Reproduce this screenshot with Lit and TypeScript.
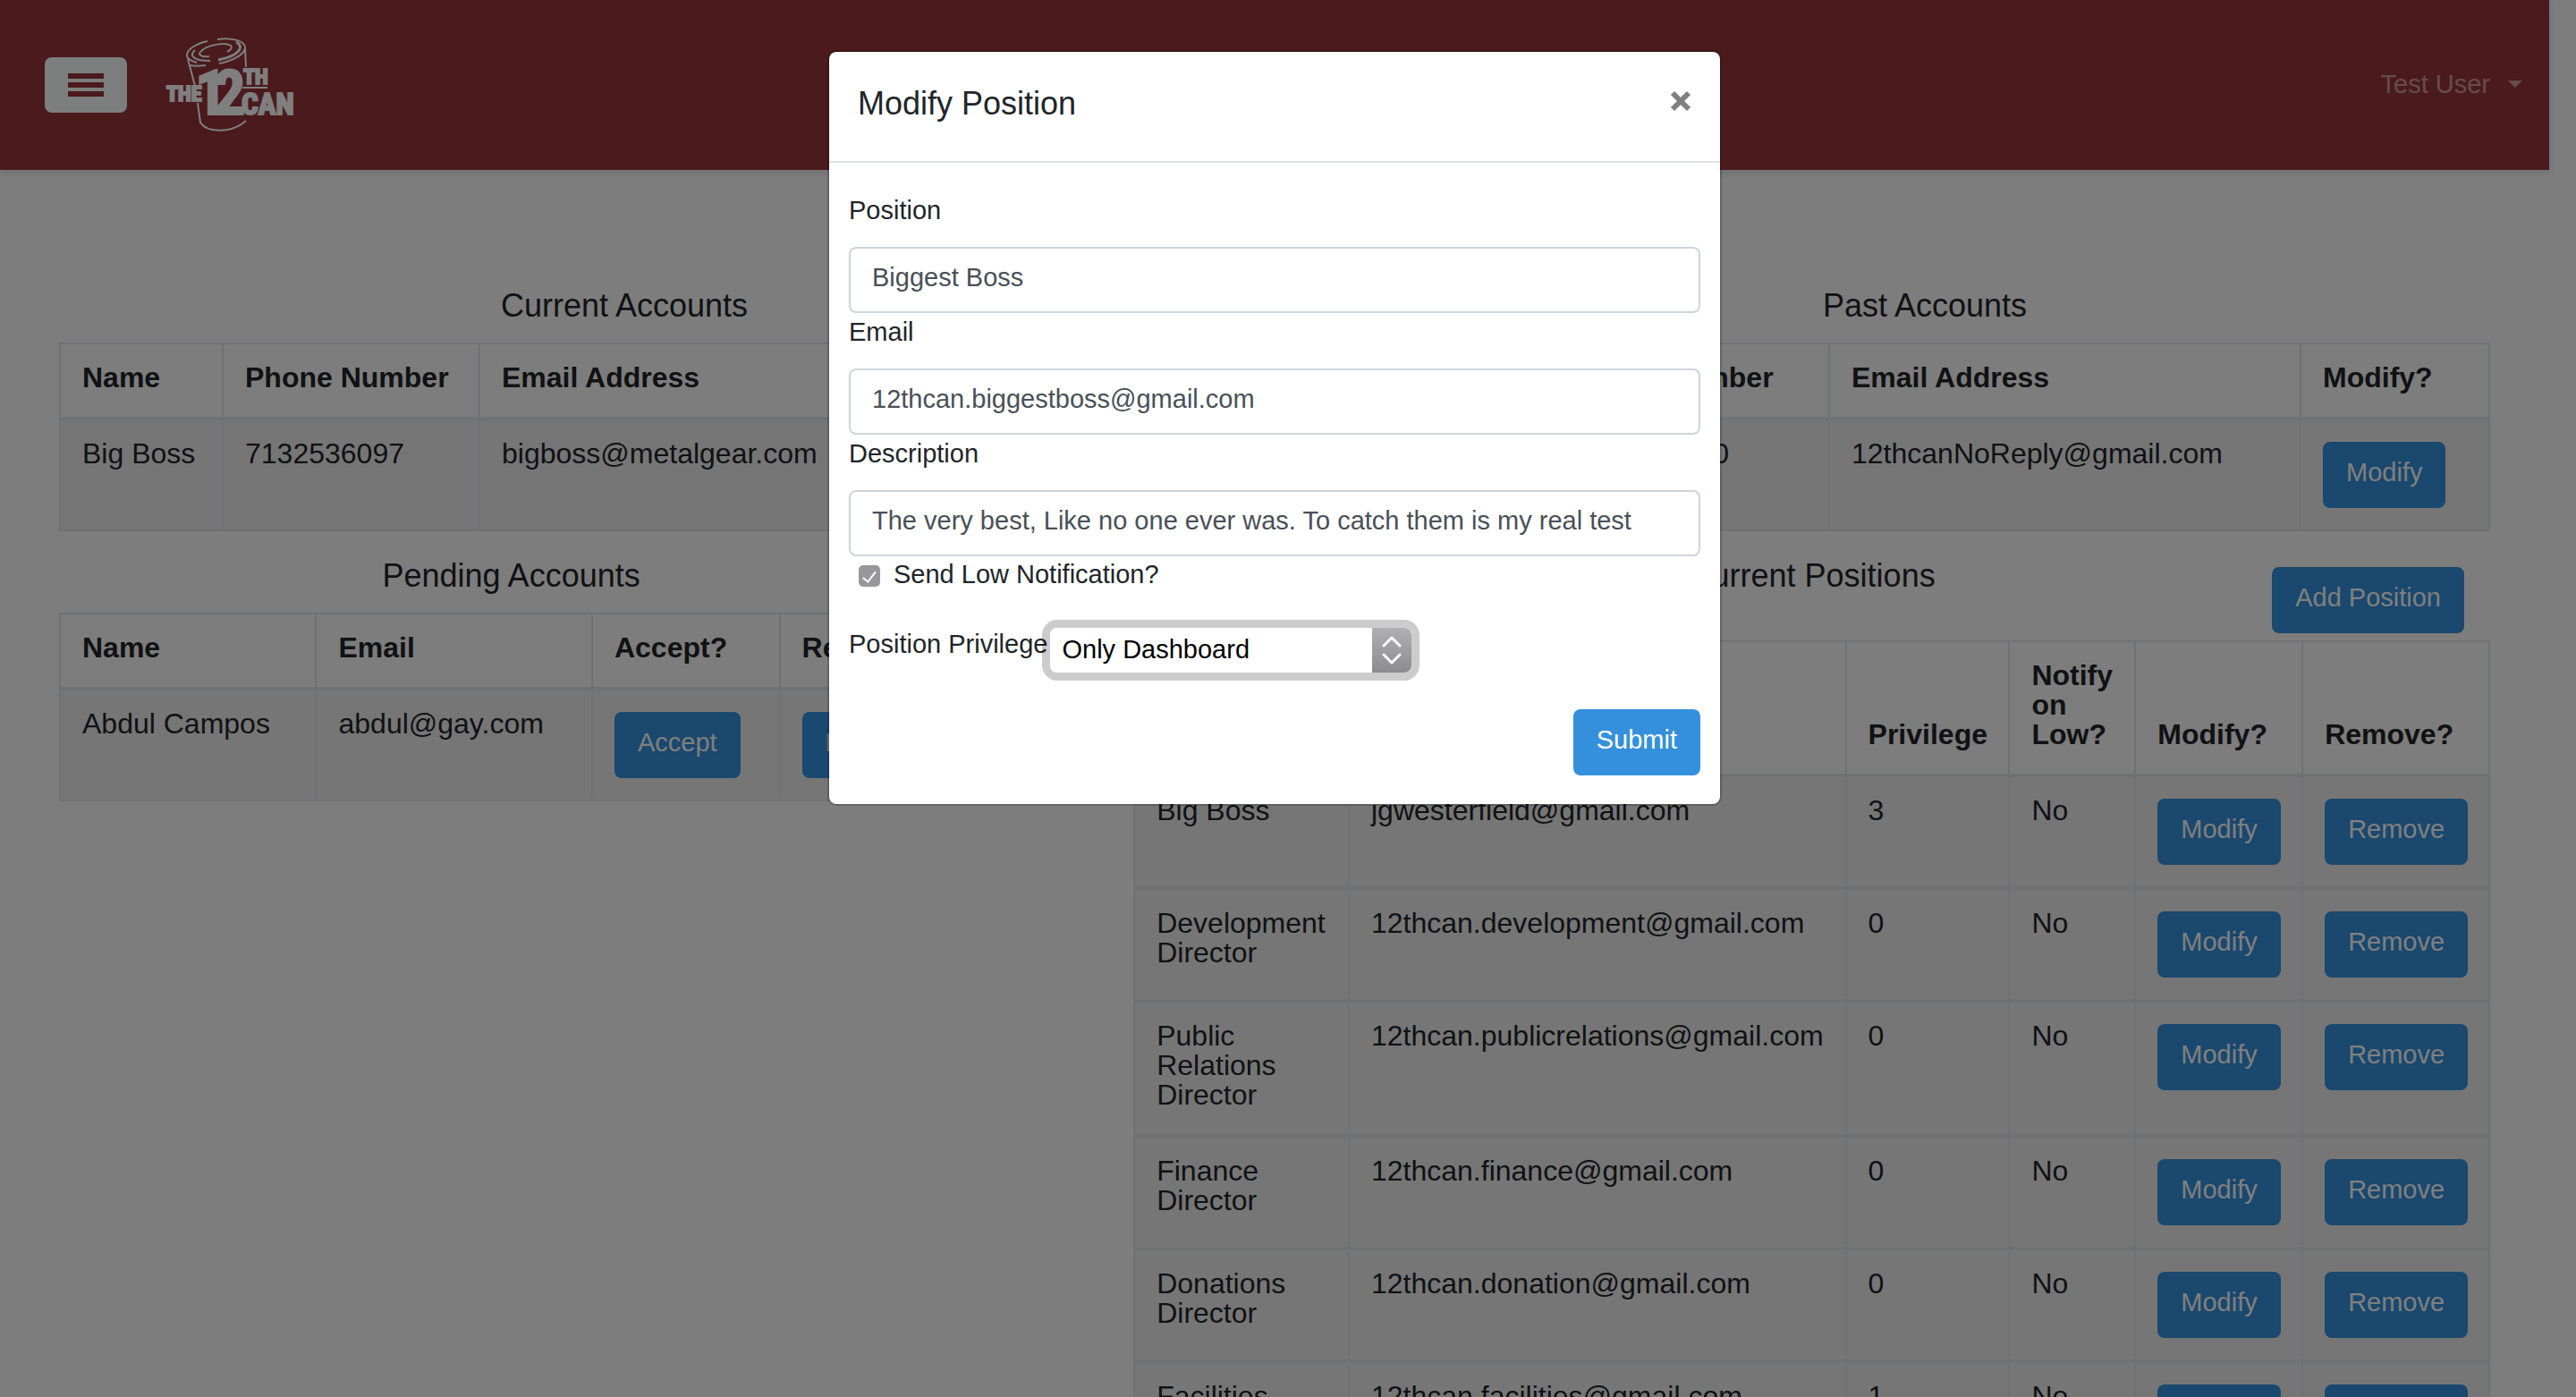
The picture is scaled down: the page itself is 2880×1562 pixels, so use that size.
import { LitElement, html, css, svg } from "lit";
import { customElement } from "lit/decorators.js";

type Cell = string | { action: string };
interface TableData {
  columns: { label: string; width: number }[];
  rows: Cell[][];
}

const modify: Cell = { action: "Modify" };
const remove: Cell = { action: "Remove" };

const currentAccounts: TableData = {
  columns: [
    { label: "Name", width: 182 },
    { label: "Phone Number", width: 287 },
    { label: "Email Address", width: 583 },
    { label: "Modify?", width: 210 },
  ],
  rows: [["Big Boss", "7132536097", "bigboss@metalgear.com", modify]],
};

const pastAccounts: TableData = {
  columns: [
    { label: "Name", width: 209 },
    { label: "Phone Number", width: 315 },
    { label: "Email Address", width: 527 },
    { label: "Modify?", width: 211 },
  ],
  rows: [["No Reply", "0000000000", "12thcanNoReply@gmail.com", modify]],
};

const pendingAccounts: TableData = {
  columns: [
    { label: "Name", width: 287 },
    { label: "Email", width: 309 },
    { label: "Accept?", width: 210 },
    { label: "Remove?", width: 205 },
  ],
  rows: [["Abdul Campos", "abdul@gay.com", { action: "Accept" }, remove]],
};

const position = (name: string, email: string, privilege: string): Cell[] => [
  name,
  email,
  privilege,
  "No",
  modify,
  remove,
];

const currentPositions: TableData = {
  columns: [
    { label: "Position", width: 240 },
    { label: "Email", width: 556 },
    { label: "Privilege", width: 183 },
    { label: "Notify on Low?", width: 141 },
    { label: "Modify?", width: 187 },
    { label: "Remove?", width: 209 },
  ],
  rows: [
    position("Big Boss", "jgwesterfield@gmail.com", "3"),
    position("Development Director", "12thcan.development@gmail.com", "0"),
    position("Public Relations Director", "12thcan.publicrelations@gmail.com", "0"),
    position("Finance Director", "12thcan.finance@gmail.com", "0"),
    position("Donations Director", "12thcan.donation@gmail.com", "0"),
    position("Facilities Director", "12thcan.facilities@gmail.com", "1"),
  ],
};

const logo = svg`
  <g fill="none" stroke="#fff" stroke-width="2">
    <path d="M47 4C34 7 24 13 24 20c0 4 4 6 11 8" />
    <path d="M58 2C74 0 87 3 89 10c1 8-13 16-29 19" />
    <path d="M33 14c-8 7 0 12 17 12" />
    <path d="M79 5c11 6 1 16-20 20" stroke-width="3" />
    <path d="M27 31c5 1 11 1 18 0" />
    <path d="M49 21c-9 1-14-2-9-6 7-7 27-10 33-6 2 2 0 5-4 7" />
    <path d="M25 24l8 30M36 73l3 22c7 11 34 13 51-2M89 12l1 21" />
  </g>
  <g fill="#fff" stroke="#fff" stroke-width="2" class="logo-text">
    <text x="1" y="71" font-size="24">THE</text>
    <text x="33" y="86" font-size="70">1</text>
    <text x="54" y="86" font-size="70">2</text>
    <text x="87" y="52" font-size="24">TH</text>
    <path d="M86 56h28" />
    <text x="85" y="86" font-size="33">CAN</text>
  </g>
`;

@customElement("app-root")
export class AppRoot extends LitElement {
  static styles = css`
    :host {
      display: block;
      height: 100vh;
      overflow: hidden;
      position: relative;
      background: #fafafa;
      color: #212529;
      font: 32px/33px "Liberation Sans", Arial, sans-serif;
    }
    *,
    *::before,
    *::after {
      box-sizing: border-box;
    }
    button,
    input,
    select {
      font: inherit;
      margin: 0;
    }
    h2,
    h3 {
      margin: 0;
      font-size: 36px;
      line-height: 36px;
      font-weight: 400;
    }
    .page {
      padding-right: 30px;
    }
    .navbar {
      display: flex;
      align-items: center;
      height: 190px;
      padding: 0 30px 0 50px;
      background: #963438;
      box-shadow: 0 4px 8px rgba(0, 0, 0, 0.1);
    }
    .menu {
      display: flex;
      flex-direction: column;
      gap: 4px;
      width: 92px;
      height: 62px;
      padding: 18px 26px;
      border: 0;
      border-radius: 8px;
      background: #fafdfc;
    }
    .bar {
      width: 40px;
      height: 6px;
      background: #963438;
    }
    .logo {
      display: block;
      width: 150px;
      height: 106px;
      margin-left: 43px;
    }
    .logo-text {
      font-family: "Liberation Sans Narrow", "Roboto Condensed", "DejaVu Sans Condensed", sans-serif;
      font-weight: 700;
    }
    .user {
      display: flex;
      align-items: center;
      gap: 20px;
      margin-left: auto;
      padding-bottom: 2px;
      color: rgba(255, 255, 255, 0.5);
      font-size: 29px;
      text-decoration: none;
    }
    .caret {
      border: 8px solid transparent;
      border-top-color: currentColor;
      border-bottom: 0;
    }
    .content {
      display: flex;
      flex-direction: column;
      gap: 32px;
      padding: 134px 66px 0;
    }
    .pair {
      display: grid;
      grid-template-columns: minmax(0, 1fr) minmax(0, 1fr);
      align-items: start;
      gap: 190px;
    }
    .pair.uneven {
      grid-template-columns: minmax(0, 2fr) minmax(0, 3fr);
    }
    .title {
      margin-bottom: 23px;
      text-align: center;
    }
    .title-row {
      display: grid;
      grid-template-columns: 1fr auto 1fr;
      align-items: start;
    }
    .title-row .title {
      grid-column: 2;
      margin: 0;
    }
    .title-row .btn {
      justify-self: end;
      margin: 8px 29px 8px 0;
    }
    table {
      width: 100%;
      table-layout: fixed;
      border-collapse: collapse;
    }
    th,
    td {
      padding: 21px 24px 27px;
      border: 2px solid #dee2e6;
      text-align: left;
      vertical-align: top;
    }
    th {
      border-bottom-width: 4px;
      vertical-align: bottom;
    }
    tbody {
      background: rgba(0, 0, 0, 0.05);
    }
    tbody + tbody td {
      border-top-width: 4px;
    }
    td.action {
      padding: 24px;
    }
    .btn {
      display: block;
      height: 74px;
      padding: 0 26px 6px;
      border: 0;
      border-radius: 8px;
      background: #3490dc;
      color: #fff;
      font-size: 29px;
      line-height: 34px;
      white-space: nowrap;
    }
    .backdrop {
      position: absolute;
      inset: 0;
      padding: 56px 30px 0 0;
      background: rgba(0, 0, 0, 0.5);
    }
    .modal {
      width: 1000px;
      margin: 0 auto;
      border: 2px solid rgba(0, 0, 0, 0.2);
      border-radius: 10px;
      background: #fff;
      background-clip: padding-box;
      font-size: 29px;
    }
    .modal-head {
      display: flex;
      align-items: flex-start;
      justify-content: space-between;
      padding: 40px 32px 46px;
      border-bottom: 2px solid #dee2e6;
    }
    .close {
      padding: 3px 0 0;
      border: 0;
      background: none;
      color: #808080;
    }
    .close-icon {
      display: block;
      width: 24px;
      height: 24px;
    }
    .form {
      display: flex;
      flex-direction: column;
      padding: 32px 22px;
    }
    .field-label {
      height: 62px;
      padding-top: 5px;
    }
    .text {
      width: 100%;
      height: 74px;
      padding: 0 24px 5px;
      border: 2px solid #ced4da;
      border-radius: 8px;
      background: #fff;
      color: #495057;
    }
    .check-row {
      display: flex;
      align-items: flex-start;
      gap: 15px;
      padding: 4px 0 0 11px;
    }
    .check {
      appearance: none;
      width: 24px;
      height: 24px;
      margin-top: 6px;
      border-radius: 5px;
      background: #98979c;
      display: grid;
      place-items: center;
    }
    .check:checked::after {
      content: "";
      width: 8px;
      height: 15px;
      margin-bottom: 2px;
      border: solid #fff;
      border-width: 0 2px 2px 0;
      transform: rotate(38deg);
    }
    .select-row {
      display: flex;
      align-items: flex-start;
      padding-top: 43px;
    }
    .privilege-label {
      padding-top: 2px;
    }
    .select-box {
      display: grid;
      width: 404px;
      margin-left: 3px;
      border-radius: 8px;
      box-shadow: 0 0 0 9px rgba(0, 0, 0, 0.2);
    }
    .select-box > * {
      grid-area: 1 / 1;
    }
    .select {
      appearance: none;
      height: 50px;
      padding: 0 60px 2px 13px;
      border: 0;
      border-radius: 8px;
      background: #fff;
      color: #000;
    }
    .arrows {
      justify-self: end;
      width: 44px;
      height: 50px;
      border-radius: 0 8px 8px 0;
      background: linear-gradient(#b0afb4, #8c8b90);
      pointer-events: none;
    }
    .submit {
      align-self: flex-end;
      margin-top: 41px;
    }
  `;

  private row(cells: Cell[]) {
    return html`<tbody>
      <tr>
        ${cells.map((cell) =>
          typeof cell === "string"
            ? html`<td>${cell}</td>`
            : html`<td class="action"><button class="btn" type="button">${cell.action}</button></td>`
        )}
      </tr>
    </tbody>`;
  }

  private table(data: TableData) {
    const total = data.columns.reduce((sum, column) => sum + column.width, 0);
    return html`<table>
      <colgroup>
        ${data.columns.map((column) => html`<col style="width:${(column.width / total) * 100}%" />`)}
      </colgroup>
      <thead>
        <tr>
          ${data.columns.map((column) => html`<th scope="col">${column.label}</th>`)}
        </tr>
      </thead>
      ${data.rows.map((cells) => this.row(cells))}
    </table>`;
  }

  private field(id: string, label: string, value: string) {
    return html`<label class="field-label" for=${id}>${label}</label>
      <input class="text" id=${id} type="text" .value=${value} />`;
  }

  render() {
    return html`
      <div class="page">
        <nav class="navbar">
          <button class="menu" type="button" aria-label="Menu">
            <span class="bar"></span><span class="bar"></span><span class="bar"></span>
          </button>
          <svg class="logo" viewBox="0 0 150 106" role="img" aria-label="The 12th Can">${logo}</svg>
          <a class="user" href="#">Test User<span class="caret"></span></a>
        </nav>
        <main class="content">
          <div class="pair">
            <section>
              <h3 class="title">Current Accounts</h3>
              ${this.table(currentAccounts)}
            </section>
            <section>
              <h3 class="title">Past Accounts</h3>
              ${this.table(pastAccounts)}
            </section>
          </div>
          <div class="pair uneven">
            <section>
              <h3 class="title">Pending Accounts</h3>
              ${this.table(pendingAccounts)}
            </section>
            <section>
              <div class="title-row">
                <h3 class="title">Current Positions</h3>
                <button class="btn" type="button">Add Position</button>
              </div>
              ${this.table(currentPositions)}
            </section>
          </div>
        </main>
      </div>
      <div class="backdrop">
        <div class="modal" role="dialog" aria-modal="true" aria-labelledby="modal-title">
          <div class="modal-head">
            <h2 id="modal-title">Modify Position</h2>
            <button class="close" type="button" aria-label="Close">
              <svg class="close-icon" viewBox="0 0 24 24" aria-hidden="true">
                <path d="M3 3l18 18M21 3L3 21" stroke="currentColor" stroke-width="6" />
              </svg>
            </button>
          </div>
          <form class="form">
            ${this.field("position", "Position", "Biggest Boss")}
            ${this.field("email", "Email", "12thcan.biggestboss@gmail.com")}
            ${this.field("description", "Description", "The very best, Like no one ever was. To catch them is my real test")}
            <div class="check-row">
              <input class="check" id="notify" type="checkbox" checked />
              <label for="notify">Send Low Notification?</label>
            </div>
            <div class="select-row">
              <label class="privilege-label" for="privilege">Position Privilege</label>
              <div class="select-box">
                <select class="select" id="privilege">
                  <option>Only Dashboard</option>
                </select>
                <svg class="arrows" viewBox="0 0 44 50" aria-hidden="true">
                  <path d="M13 20l9-9 9 9M13 30l9 9 9-9" fill="none" stroke="#fff" stroke-width="3" stroke-linecap="round" stroke-linejoin="round" />
                </svg>
              </div>
            </div>
            <button class="btn submit" type="button">Submit</button>
          </form>
        </div>
      </div>
    `;
  }
}
